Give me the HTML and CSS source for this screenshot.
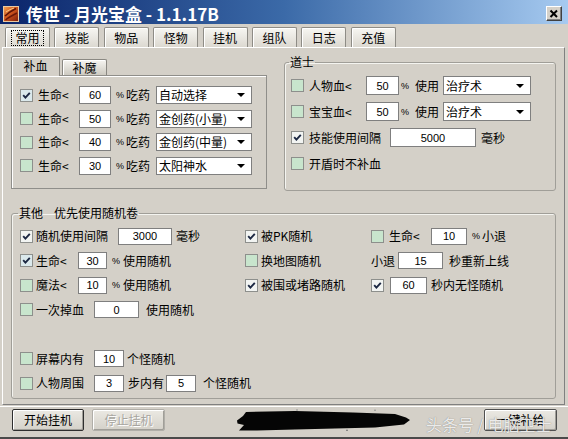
FILE: index.html
```html
<!DOCTYPE html>
<html lang="zh-CN">
<head>
<meta charset="utf-8">
<title>传世 - 月光宝盒 - 1.1.17B</title>
<link rel="stylesheet" href="styles.css">
</head>
<body>
<div class="window">
  <header class="titlebar">
    <svg class="app-icon" viewBox="0 0 16 16" aria-hidden="true">
      <defs>
        <linearGradient id="ig" x1="0" y1="0" x2="1" y2="1">
          <stop offset="0" stop-color="#f4a454"/>
          <stop offset="0.45" stop-color="#d0561e"/>
          <stop offset="1" stop-color="#7a1c08"/>
        </linearGradient>
      </defs>
      <rect x="0.5" y="0.5" width="15" height="15" fill="url(#ig)" stroke="#e9c9a2"/>
      <path d="M2 10 C5 7 8 5 13 2.5" stroke="#5c1406" stroke-width="1.6" fill="none"/>
      <path d="M2.5 14 C6 11 9 9.5 14 7" stroke="#6a1808" stroke-width="1.4" fill="none"/>
      <path d="M3 6 C6 4 8 3 11 2" stroke="#ffd08a" stroke-width="0.9" fill="none"/>
    </svg>
    <span class="title">传世 - 月光宝盒 - 1.1.17B</span>
    <button class="close" aria-label="关闭">
      <svg viewBox="0 0 14 12" aria-hidden="true"><path d="M3.5 2.5 L10 9 M10 2.5 L3.5 9" stroke="#000" stroke-width="2" fill="none"/></svg>
    </button>
  </header>

  <nav class="tabs">
    <div class="tab active"><span class="focus">常用</span></div>
    <div class="tab">技能</div>
    <div class="tab">物品</div>
    <div class="tab">怪物</div>
    <div class="tab">挂机</div>
    <div class="tab">组队</div>
    <div class="tab">日志</div>
    <div class="tab">充值</div>
  </nav>

  <main class="page">
    <div class="top-row">
      <section class="subtab-ctl">
        <div class="subtabs">
          <div class="subtab active">补血</div>
          <div class="subtab">补魔</div>
        </div>
        <div class="subpanel">
          <div class="row">
            <span class="cb on"><svg viewBox="0 0 11 11"><path d="M2.2 5.2 L4.4 7.6 L8.8 2.8" stroke="#1b2742" stroke-width="1.9" fill="none"/></svg></span>
            <span class="lbl ml5 l41">生命&lt;</span>
            <input class="num h18 w32" type="text" value="60">
            <span class="pct p10">%</span>
            <span class="lbl l24">吃药</span>
            <div class="combo h18 w96 ml6"><span>自动选择</span><i class="arrow"></i></div>
          </div>
          <div class="row">
            <span class="cb"></span>
            <span class="lbl ml5 l41">生命&lt;</span>
            <input class="num h18 w32" type="text" value="50">
            <span class="pct p10">%</span>
            <span class="lbl l24">吃药</span>
            <div class="combo h18 w96 ml6"><span>金创药(小量)</span><i class="arrow"></i></div>
          </div>
          <div class="row">
            <span class="cb"></span>
            <span class="lbl ml5 l41">生命&lt;</span>
            <input class="num h18 w32" type="text" value="40">
            <span class="pct p10">%</span>
            <span class="lbl l24">吃药</span>
            <div class="combo h18 w96 ml6"><span>金创药(中量)</span><i class="arrow"></i></div>
          </div>
          <div class="row">
            <span class="cb"></span>
            <span class="lbl ml5 l41">生命&lt;</span>
            <input class="num h18 w32" type="text" value="30">
            <span class="pct p10">%</span>
            <span class="lbl l24">吃药</span>
            <div class="combo h18 w96 ml6"><span>太阳神水</span><i class="arrow"></i></div>
          </div>
        </div>
      </section>

      <fieldset class="group daoshi">
        <legend>道士</legend>
        <div class="rows">
          <div class="row">
            <span class="cb"></span>
            <span class="lbl ml5 l57">人物血&lt;</span>
            <input class="num h19 w33" type="text" value="50">
            <span class="pct p14">%</span>
            <span class="lbl l28">使用</span>
            <div class="combo h19 w88"><span>治疗术</span><i class="arrow"></i></div>
          </div>
          <div class="row">
            <span class="cb"></span>
            <span class="lbl ml5 l57">宝宝血&lt;</span>
            <input class="num h19 w33" type="text" value="50">
            <span class="pct p14">%</span>
            <span class="lbl l28">使用</span>
            <div class="combo h19 w88"><span>治疗术</span><i class="arrow"></i></div>
          </div>
          <div class="row">
            <span class="cb on white"><svg viewBox="0 0 11 11"><path d="M2.2 5.2 L4.4 7.6 L8.8 2.8" stroke="#1b2742" stroke-width="1.9" fill="none"/></svg></span>
            <span class="lbl ml5 l81">技能使用间隔</span>
            <input class="num h19 w86" type="text" value="5000">
            <span class="lbl ml5">毫秒</span>
          </div>
          <div class="row">
            <span class="cb"></span>
            <span class="lbl ml5">开盾时不补血</span>
          </div>
        </div>
      </fieldset>
    </div>

    <fieldset class="group other">
      <legend>其他<span class="lg-gap"></span>优先使用随机卷</legend>
      <div class="grid">
        <div class="cell c1 r1">
          <span class="cb on white"><svg viewBox="0 0 11 11"><path d="M2.2 5.2 L4.4 7.6 L8.8 2.8" stroke="#1b2742" stroke-width="1.9" fill="none"/></svg></span>
          <span class="lbl ml3 l82">随机使用间隔</span>
          <input class="num h17 w54" type="text" value="3000">
          <span class="lbl ml4">毫秒</span>
        </div>
        <div class="cell c2 r1">
          <span class="cb on white"><svg viewBox="0 0 11 11"><path d="M2.2 5.2 L4.4 7.6 L8.8 2.8" stroke="#1b2742" stroke-width="1.9" fill="none"/></svg></span>
          <span class="lbl ml3">被PK随机</span>
        </div>
        <div class="cell c3 r1">
          <span class="cb"></span>
          <span class="lbl ml5 l42">生命&lt;</span>
          <input class="num h17 w36" type="text" value="10">
          <span class="pct p10">%</span>
          <span class="lbl">小退</span>
        </div>

        <div class="cell c1 r2">
          <span class="cb on"><svg viewBox="0 0 11 11"><path d="M2.2 5.2 L4.4 7.6 L8.8 2.8" stroke="#1b2742" stroke-width="1.9" fill="none"/></svg></span>
          <span class="lbl ml3 l42">生命&lt;</span>
          <input class="num h17 w29" type="text" value="30">
          <span class="pct p11">%</span>
          <span class="lbl">使用随机</span>
        </div>
        <div class="cell c2 r2">
          <span class="cb"></span>
          <span class="lbl ml3">换地图随机</span>
        </div>
        <div class="cell c3 r2">
          <span class="lbl l27">小退</span>
          <input class="num h17 w45" type="text" value="15">
          <span class="lbl ml6">秒重新上线</span>
        </div>

        <div class="cell c1 r3">
          <span class="cb"></span>
          <span class="lbl ml3 l42">魔法&lt;</span>
          <input class="num h17 w29" type="text" value="10">
          <span class="pct p11">%</span>
          <span class="lbl">使用随机</span>
        </div>
        <div class="cell c2 r3">
          <span class="cb on white"><svg viewBox="0 0 11 11"><path d="M2.2 5.2 L4.4 7.6 L8.8 2.8" stroke="#1b2742" stroke-width="1.9" fill="none"/></svg></span>
          <span class="lbl ml3">被围或堵路随机</span>
        </div>
        <div class="cell c3 r3">
          <span class="cb on white"><svg viewBox="0 0 11 11"><path d="M2.2 5.2 L4.4 7.6 L8.8 2.8" stroke="#1b2742" stroke-width="1.9" fill="none"/></svg></span>
          <input class="num h17 w37 ml6" type="text" value="60">
          <span class="lbl ml4">秒内无怪随机</span>
        </div>

        <div class="cell c1 r4">
          <span class="cb"></span>
          <span class="lbl ml3 l58">一次掉血</span>
          <input class="num h17 w45" type="text" value="0">
          <span class="lbl ml7">使用随机</span>
        </div>

        <div class="cell c1 r6">
          <span class="cb"></span>
          <span class="lbl ml3 l58">屏幕内有</span>
          <input class="num h17 w30" type="text" value="10">
          <span class="lbl ml3">个怪随机</span>
        </div>

        <div class="cell c1 r7">
          <span class="cb"></span>
          <span class="lbl ml3 l58">人物周围</span>
          <input class="num h17 w30" type="text" value="3">
          <span class="lbl ml4 l38">步内有</span>
          <input class="num h17 w30" type="text" value="5">
          <span class="lbl ml7">个怪随机</span>
        </div>
      </div>
    </fieldset>
  </main>

  <footer class="footer">
    <button class="btn default">开始挂机</button>
    <button class="btn disabled">停止挂机</button>
    <svg class="scribble" viewBox="0 0 176 22" aria-hidden="true">
      <path d="M11 3 L60 2 L118 3.5 L160 5 L171 8.5 L175 11 L169 15.5 L140 18.5 L100 19.5 L60 20.5 L22 21.5 L4 21.5 L9 16 L2.5 14.5 L2 11.5 L8 7 Z" fill="#050505"/>
      <circle cx="62" cy="1" r="0.8" fill="#8a8a8a"/>
      <circle cx="112" cy="21.5" r="0.9" fill="#7a7a7a"/>
      <circle cx="140" cy="1.2" r="0.8" fill="#8a8a8a"/>
    </svg>
    <button class="btn right">一键补给</button>
  </footer>

  <div class="watermark">头条号 / 电脑卫士</div>
</div>
</body>
</html>
```

FILE: styles.css
```css
* { box-sizing: border-box; }

html, body {
  margin: 0;
  padding: 0;
}

body {
  width: 568px;
  height: 439px;
  overflow: hidden;
  background: #d4d0c8;
  font-family: "Noto Sans CJK SC", "Liberation Sans", sans-serif;
  font-size: 12px;
  line-height: 14px;
  color: #000;
}

.window {
  position: relative;
  width: 568px;
  height: 439px;
  display: flex;
  flex-direction: column;
  background: #d4d0c8;
  border-bottom: 2px solid #4a4a4a;
}

/* ---------- title bar ---------- */
.titlebar {
  height: 24px;
  flex: none;
  display: flex;
  align-items: center;
  padding: 3px 6px 0 3px;
  background: linear-gradient(to right, #0a246a 0%, #3b6aa8 50%, #a6caf0 100%);
}

.app-icon {
  width: 16px;
  height: 16px;
  flex: none;
}

.title {
  margin-left: 7px;
  color: #fff;
  font-weight: bold;
  font-size: 17px;
  line-height: 20px;
  white-space: nowrap;
}

.close {
  margin-left: auto;
  width: 16px;
  height: 15px;
  padding: 0;
  display: flex;
  align-items: center;
  justify-content: center;
  background: #d4d0c8;
  border: 1px solid;
  border-color: #fff #404040 #404040 #fff;
  box-shadow: inset -1px -1px 0 #808080;
}

.close svg {
  width: 14px;
  height: 12px;
  display: block;
}

/* ---------- main tabs ---------- */
.tabs {
  height: 23px;
  flex: none;
  display: flex;
  gap: 4.4px;
  padding: 3px 0 0 5px;
}

.tab {
  width: 45px;
  height: 20px;
  display: flex;
  align-items: center;
  justify-content: center;
  border: 1px solid #8e8c86;
  border-bottom: none;
  border-radius: 2px 2px 0 0;
  background: linear-gradient(#f7f6f2, #dcd9d1);
  box-shadow: inset 1px 1px 0 #fff;
}

.tab .focus {
  padding: 0 3px;
  border: 1px dotted #000;
  line-height: 14px;
}

/* ---------- page ---------- */
.page {
  flex: none;
  height: 358px;
  margin: 0 3px 0 2px;
  padding: 8px 0 0 8px;
  border-top: 1px solid #fff;
  border-left: 1px solid #fff;
  border-right: 1px solid #808080;
  border-bottom: 1px solid #808080;
}

.top-row {
  display: flex;
  align-items: flex-start;
}

/* sub tab control */
.subtab-ctl {
  width: 256px;
  flex: none;
}

.subtabs {
  height: 19px;
  display: flex;
  align-items: flex-end;
  gap: 2px;
}

.subtab {
  position: relative;
  display: flex;
  align-items: center;
  justify-content: center;
  width: 45px;
  height: 16px;
  border: 1px solid #8a8882;
  border-bottom: none;
  border-radius: 2px 2px 0 0;
  background: linear-gradient(#f6f5f1, #cdcac1);
  box-shadow: inset 1px 1px 0 #fff;
}

.subtab.active {
  z-index: 1;
  width: 49px;
  height: 20px;
  margin-bottom: -1px;
  padding-bottom: 2px;
  background: #d4d0c8;
}

.subpanel {
  height: 114px;
  padding: 10px 0 0 8px;
  border: 1px solid #8f8e8a;
  box-shadow: inset 1px 1px 0 #fff;
  display: flex;
  flex-direction: column;
  gap: 5.5px;
}

.row {
  display: flex;
  align-items: center;
  height: 18px;
  white-space: nowrap;
}

/* group boxes */
.group {
  margin: 0;
  border: 1px solid #a09e98;
  border-radius: 3px;
  box-shadow: inset 1px 1px 0 #f4f4f0;
  min-width: 0;
}

.group legend {
  padding: 0 1px;
  margin-left: -2px;
  line-height: 14px;
}

.daoshi {
  width: 272px;
  margin-left: 17px;
  margin-top: -1px;
  padding: 7px 0 17px 6px;
}

.daoshi .rows {
  display: flex;
  flex-direction: column;
  gap: 7px;
}

.daoshi .row {
  height: 19px;
}

.other {
  width: 545px;
  margin-top: 15px;
  padding: 7px 0 6px 8px;
}

.lg-gap {
  display: inline-block;
  width: 11px;
}

.grid {
  display: grid;
  grid-template-columns: 225px 126px 1fr;
  grid-template-rows: repeat(7, 18px);
  row-gap: 6.5px;
}

.cell {
  display: flex;
  align-items: center;
  white-space: nowrap;
}

.c1 { grid-column: 1; }
.c2 { grid-column: 2; }
.c3 { grid-column: 3; }
.r1 { grid-row: 1; }
.r2 { grid-row: 2; }
.r3 { grid-row: 3; }
.r4 { grid-row: 4; }
.r6 { grid-row: 6; }
.r7 { grid-row: 7; }

/* ---------- controls ---------- */
.cb {
  width: 13px;
  height: 13px;
  flex: none;
  border: 1px solid #8d8f8c;
  background: #c8e5cd;
  display: inline-flex;
}

.cb.on {
  background: #dbe9ec;
}

.cb.on.white {
  background: #f2f4f2;
}

.cb svg {
  width: 11px;
  height: 11px;
  display: block;
}

.lbl {
  flex: none;
}

.l24 { width: 24px; }
.l27 { width: 27px; }
.l28 { width: 28px; }
.l38 { width: 38px; }
.l41 { width: 41px; }
.l42 { width: 42px; }
.l57 { width: 57px; }
.l58 { width: 58px; }
.l81 { width: 81px; }
.l82 { width: 82px; }

.ml3 { margin-left: 3px; }
.ml4 { margin-left: 4px; }
.ml5 { margin-left: 5px; }
.ml6 { margin-left: 6px; }
.ml7 { margin-left: 7px; }

.pct {
  flex: none;
  font-family: "Liberation Sans", sans-serif;
  font-size: 9px;
  line-height: 12px;
}

.p10 { width: 10px; margin-left: 5px; }
.p11 { width: 11px; margin-left: 5px; }
.p14 { width: 14px; margin-left: 2px; }

.num {
  flex: none;
  margin: 0;
  padding: 0;
  border: 1px solid #7f7f7f;
  background: #fff;
  color: #000;
  font-family: "Liberation Sans", sans-serif;
  font-size: 11px;
  text-align: center;
  outline: none;
}

.num.ml6 { margin-left: 6px; }

.h17 { height: 17px; }
.h18 { height: 18px; }
.h19 { height: 19px; }

.w29 { width: 29px; }
.w30 { width: 30px; }
.w32 { width: 32px; }
.w33 { width: 33px; }
.w36 { width: 36px; }
.w37 { width: 37px; }
.w45 { width: 45px; }
.w54 { width: 54px; }
.w86 { width: 86px; }
.w88 { width: 88px; }
.w96 { width: 96px; }

.combo {
  flex: none;
  display: flex;
  align-items: center;
  padding-left: 2px;
  border: 1px solid #7f7f7f;
  background: #fff;
  white-space: nowrap;
}

.arrow {
  width: 0;
  height: 0;
  margin-left: auto;
  margin-right: 6px;
  border-left: 4px solid transparent;
  border-right: 4px solid transparent;
  border-top: 4px solid #000;
}

/* ---------- footer ---------- */
.footer {
  flex: none;
  height: 31px;
  margin-top: 1px;
  border-top: 1px solid #fff;
  display: flex;
  align-items: flex-start;
  padding: 2px 0 0 12px;
}

.btn {
  height: 22px;
  padding: 0;
  font-family: "Noto Sans CJK SC", sans-serif;
  font-size: 12px;
  line-height: 14px;
  color: #000;
  background: linear-gradient(#ebe9e3, #d4d1c9);
  border: 1px solid #8a8882;
  border-radius: 2px;
  box-shadow: inset 1px 1px 0 #fff, inset -1px -1px 0 #a09e98;
}

.btn.default {
  width: 72px;
  border-color: #2e2e2e;
}

.btn.disabled {
  width: 73px;
  margin-left: 8px;
  color: #a7a59f;
  border-color: #b0aea8;
  text-shadow: 1px 1px 0 #fff;
}

.btn.right {
  width: 73px;
  margin-left: auto;
  margin-right: 11px;
  border-color: #505050;
}

.scribble {
  width: 176px;
  height: 22px;
  margin-left: 70px;
  flex: none;
}

.watermark {
  position: absolute;
  left: 426px;
  top: 414px;
  font-family: "Noto Sans CJK SC", sans-serif;
  font-size: 16px;
  line-height: 20px;
  color: rgba(255, 255, 255, 0.86);
  text-shadow: 0 0 1px rgba(70, 70, 70, 0.7);
  white-space: nowrap;
  pointer-events: none;
}
```
